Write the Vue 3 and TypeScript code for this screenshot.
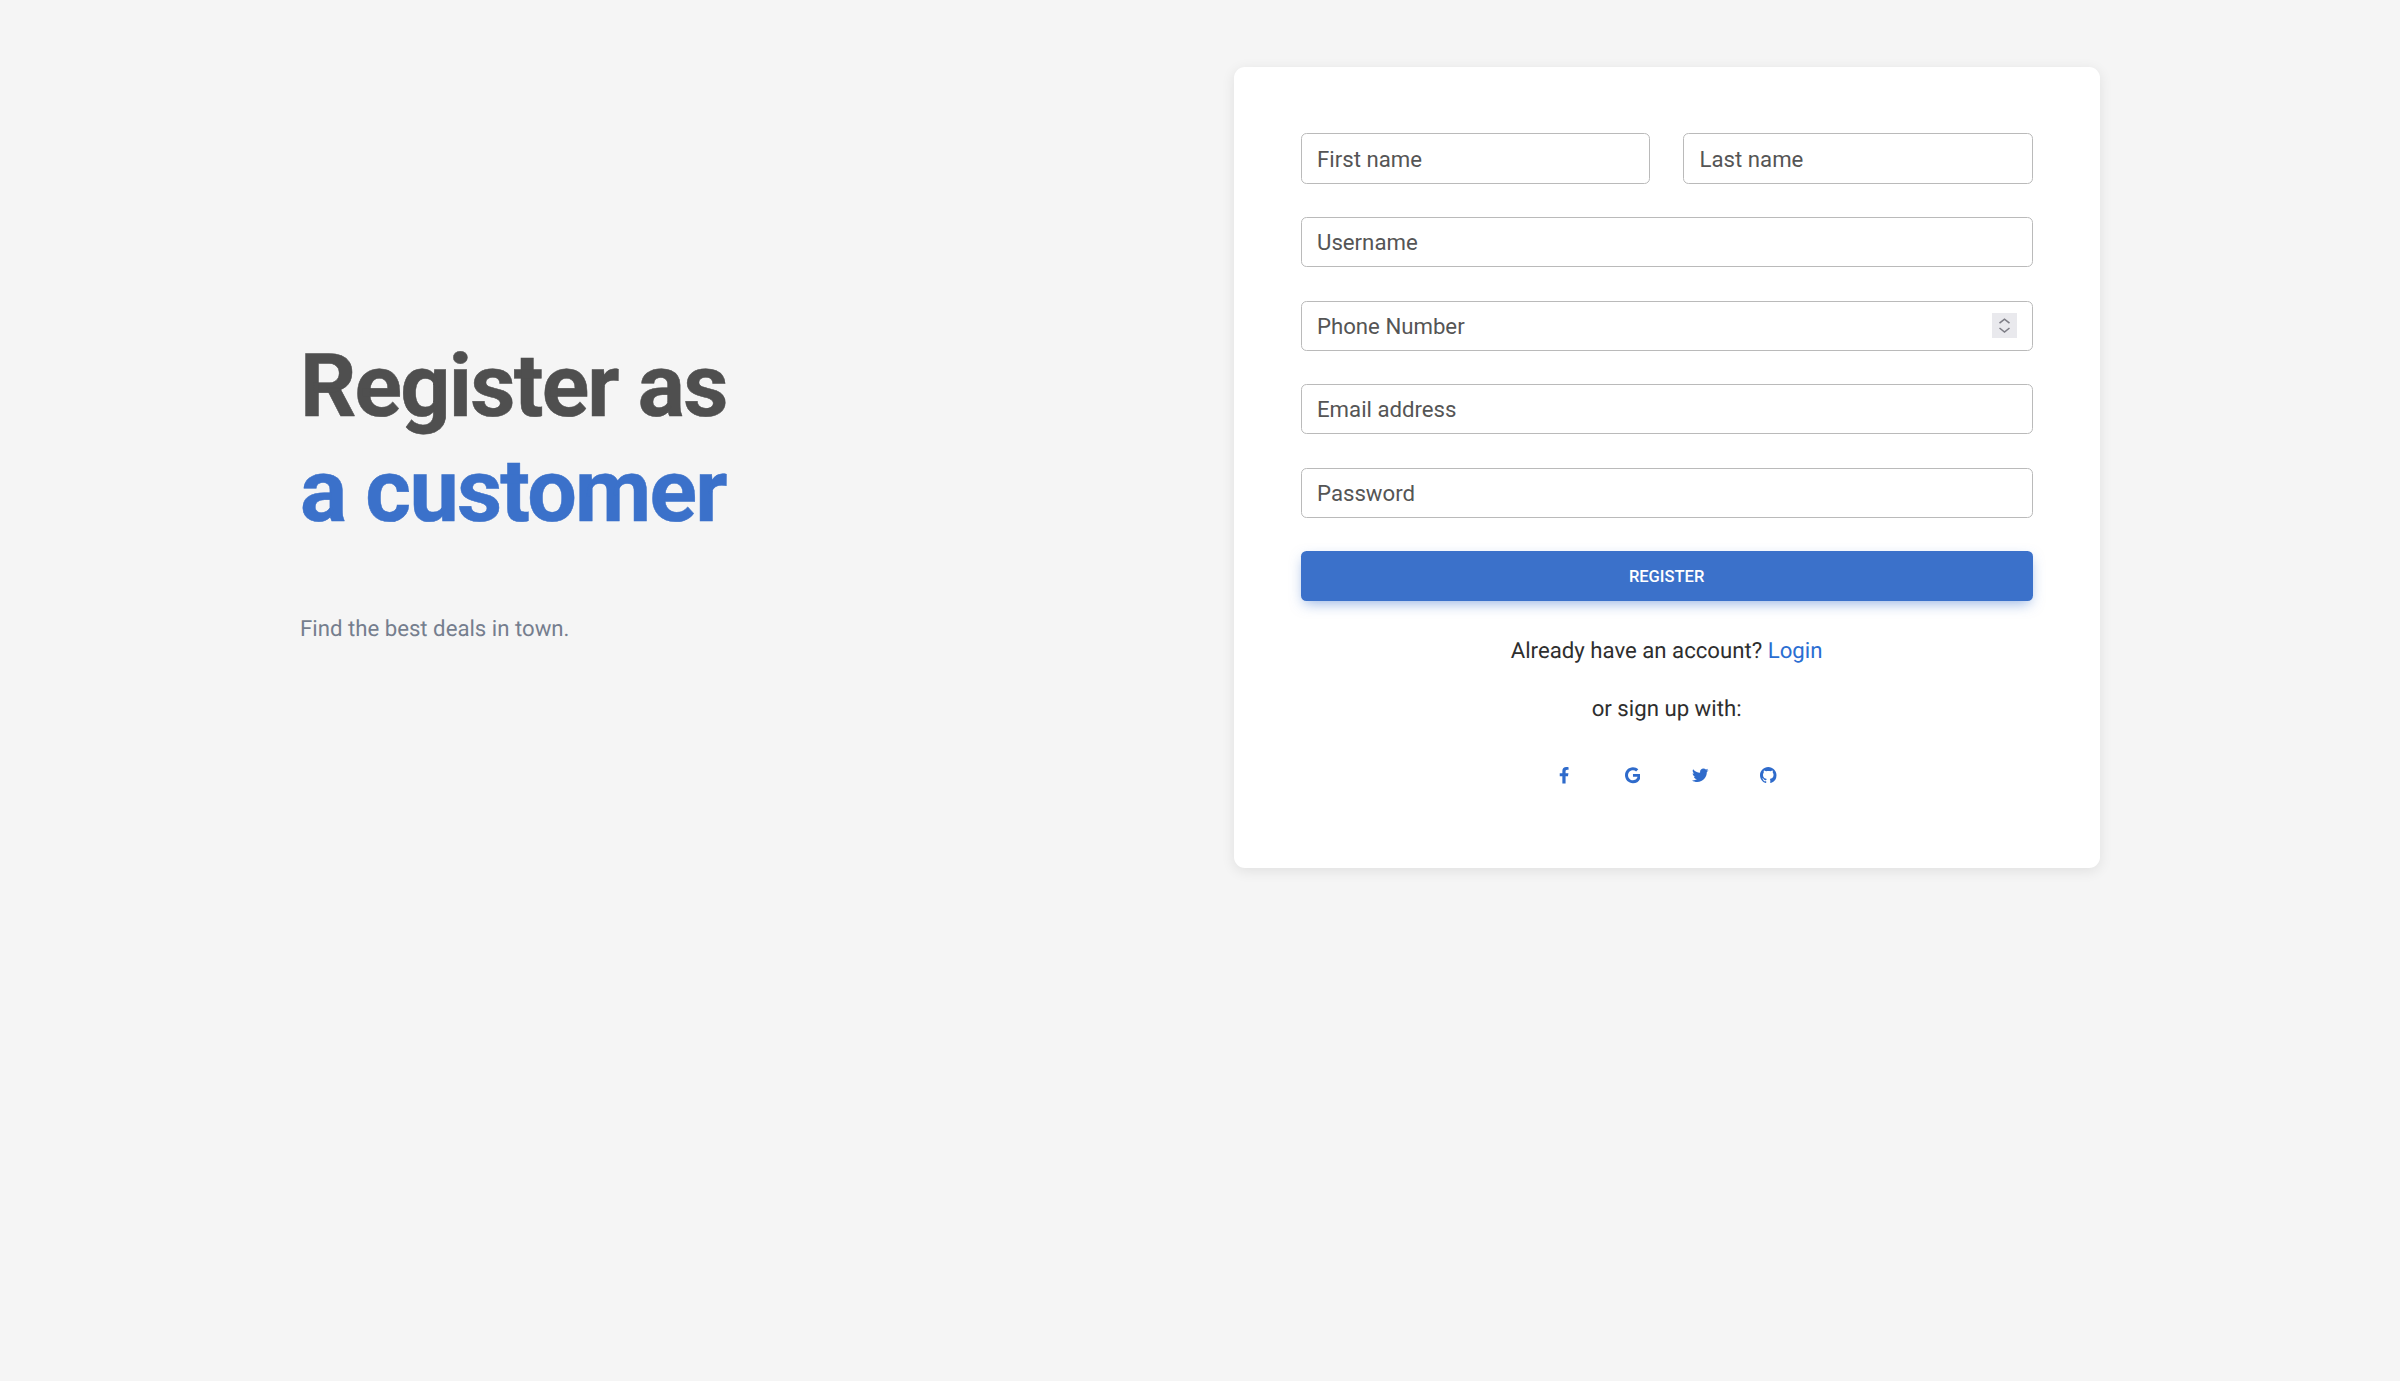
<template>
  <section class="page">
    <div class="intro">
      <h1 class="headline">
        Register as<br />
        <span class="accent">a customer</span>
      </h1>
      <p class="tagline">Find the best deals in town.</p>
    </div>

    <form class="card" @submit.prevent>
      <div class="name-row">
        <input class="field" type="text" placeholder="First name" />
        <input class="field" type="text" placeholder="Last name" />
      </div>
      <input class="field" type="text" placeholder="Username" />
      <div class="phone">
        <input class="field" type="text" placeholder="Phone Number" />
        <span class="spinner">
          <svg viewBox="0 0 25 25" width="25" height="25" fill="none" stroke="#7d7d85" stroke-width="1.6">
            <path d="M7.5 10.2l5-4 5 4" />
            <path d="M7.5 15l5 4 5-4" />
          </svg>
        </span>
      </div>
      <input class="field" type="email" placeholder="Email address" />
      <input class="field" type="password" placeholder="Password" />

      <button class="submit" type="submit">Register</button>

      <div class="alt">
        <p>Already have an account? <a href="#" class="login">Login</a></p>
        <p>or sign up with:</p>
        <div class="socials">
          <a v-for="icon in icons" :key="icon.name" href="#" class="social" :aria-label="icon.name">
            <svg :viewBox="icon.box" :width="icon.width" height="16.5" fill="currentColor">
              <path :d="icon.path" />
            </svg>
          </a>
        </div>
      </div>
    </form>
  </section>
</template>

<script setup lang="ts">
interface SocialIcon {
  name: string;
  box: string;
  width: number;
  path: string;
}

const icons: SocialIcon[] = [
  {
    name: 'facebook',
    box: '0 0 320 512',
    width: 10.3,
    path: 'M279.14 288l14.22-92.66h-88.91v-60.13c0-25.35 12.42-50.06 52.24-50.06h40.42V6.26S260.43 0 225.36 0c-73.22 0-121.08 44.38-121.08 124.72v70.62H22.89V288h81.39v224h100.17V288z',
  },
  {
    name: 'google',
    box: '0 0 488 512',
    width: 15.7,
    path: 'M488 261.8C488 403.3 391.1 504 248 504 110.8 504 0 393.2 0 256S110.8 8 248 8c66.8 0 123 24.5 166.3 64.9l-67.5 64.9C258.5 52.6 94.3 116.6 94.3 256c0 86.5 69.1 156.6 153.7 156.6 98.2 0 135-70.4 140.8-106.9H248v-85.3h236.1c2.3 12.7 3.9 24.9 3.9 41.4z',
  },
  {
    name: 'twitter',
    box: '0 0 512 512',
    width: 16.5,
    path: 'M459.37 151.716c.325 4.548.325 9.097.325 13.645 0 138.72-105.583 298.558-298.558 298.558-59.452 0-114.68-17.219-161.137-47.106 8.447.974 16.568 1.299 25.34 1.299 49.055 0 94.213-16.568 130.274-44.832-46.132-.975-84.792-31.188-98.112-72.772 6.498.974 12.995 1.624 19.818 1.624 9.421 0 18.843-1.3 27.614-3.573-48.081-9.747-84.143-51.98-84.143-102.985v-1.299c13.969 7.797 30.214 12.67 47.431 13.319-28.264-18.843-46.781-51.005-46.781-87.391 0-19.492 5.197-37.36 14.294-52.954 51.655 63.675 129.3 105.258 216.365 109.807-1.624-7.797-2.599-15.918-2.599-24.04 0-57.828 46.782-104.934 104.934-104.934 30.213 0 57.502 12.67 76.67 33.137 23.715-4.548 46.456-13.32 66.599-25.34-7.798 24.366-24.366 44.833-46.132 57.827 21.117-2.273 41.584-8.122 60.426-16.243-14.292 20.791-32.161 39.308-52.628 54.253z',
  },
  {
    name: 'github',
    box: '0 0 16 16',
    width: 16.5,
    path: 'M8 0C3.58 0 0 3.58 0 8c0 3.54 2.29 6.53 5.47 7.59.4.07.55-.17.55-.38 0-.19-.01-.82-.01-1.49-2.01.37-2.53-.49-2.69-.94-.09-.23-.48-.94-.82-1.13-.28-.15-.68-.52-.01-.53.63-.01 1.08.58 1.23.82.72 1.21 1.87.87 2.33.66.07-.52.28-.87.51-1.07-1.78-.2-3.64-.89-3.64-3.95 0-.87.31-1.59.82-2.15-.08-.2-.36-1.02.08-2.12 0 0 .67-.21 2.2.82.64-.18 1.32-.27 2-.27.68 0 1.36.09 2 .27 1.53-1.04 2.2-.82 2.2-.82.44 1.1.16 1.92.08 2.12.51.56.82 1.27.82 2.15 0 3.07-1.87 3.75-3.65 3.95.29.25.54.73.54 1.48 0 1.07-.01 1.93-.01 2.2 0 .21.15.46.55.38A8.013 8.013 0 0016 8c0-4.42-3.58-8-8-8z',
  },
];
</script>

<style>
html,
body {
  background: #f5f5f5;
}
</style>

<style scoped>
.page {
  box-sizing: border-box;
  min-height: 1381px;
  padding: 66.7px 300px 0;
  display: flex;
  justify-content: space-between;
  align-items: flex-start;
  font-family: Roboto, sans-serif;
  font-size: 22.2px;
  line-height: 35.2px;
  color: #2e2e2e;
  text-rendering: geometricPrecision;
}

.intro {
  padding-top: 267px;
}

.headline {
  margin: 0 0 67.5px;
  font-size: 88px;
  font-weight: 700;
  line-height: 1.2;
  letter-spacing: -1.8px;
  color: #4f4f4f;
  -webkit-text-stroke: 0.5px currentColor;
}

.accent {
  color: #3b71ca;
}

.tagline {
  margin: 0 0 22px;
  color: #757e8e;
}

.card {
  box-sizing: border-box;
  width: 866px;
  padding: 66.8px 67.3px 65.6px 66.5px;
  display: flex;
  flex-direction: column;
  gap: 33.4px;
  background: #fff;
  border-radius: 11px;
  box-shadow: 0 3px 14px rgba(0, 0, 0, 0.09);
}

.name-row {
  display: flex;
  gap: 33px;
}

.field {
  box-sizing: border-box;
  display: block;
  width: 100%;
  min-width: 0;
  height: 50.2px;
  padding: 0 15px 0 15.5px;
  border: 1.5px solid #bababa;
  border-radius: 5.5px;
  background: #fff;
  font: inherit;
  color: #555;
  outline: none;
}

.field::placeholder {
  color: #555;
  opacity: 1;
}

.phone {
  position: relative;
}

.spinner {
  position: absolute;
  top: 12.5px;
  right: 16px;
  width: 25px;
  height: 25px;
  background: #e9e9ed;
}

.spinner svg {
  display: block;
}

.submit {
  box-sizing: border-box;
  height: 49.5px;
  border: none;
  border-radius: 5.5px;
  background: #3b71ca;
  color: #fff;
  font-family: inherit;
  font-size: 16.5px;
  font-weight: 500;
  text-transform: uppercase;
  box-shadow: 0 5px 14px -3px rgba(59, 113, 202, 0.55);
}

.alt {
  margin-top: -0.4px;
  text-align: center;
}

.alt p {
  margin: 0 0 22.6px;
}

.login {
  color: #2a6ed2;
  text-decoration: none;
}

.socials {
  display: flex;
  justify-content: center;
  margin-top: -1px;
}

.social {
  width: 68px;
  height: 54px;
  display: flex;
  align-items: center;
  justify-content: center;
  color: #2f6bcb;
}
</style>
